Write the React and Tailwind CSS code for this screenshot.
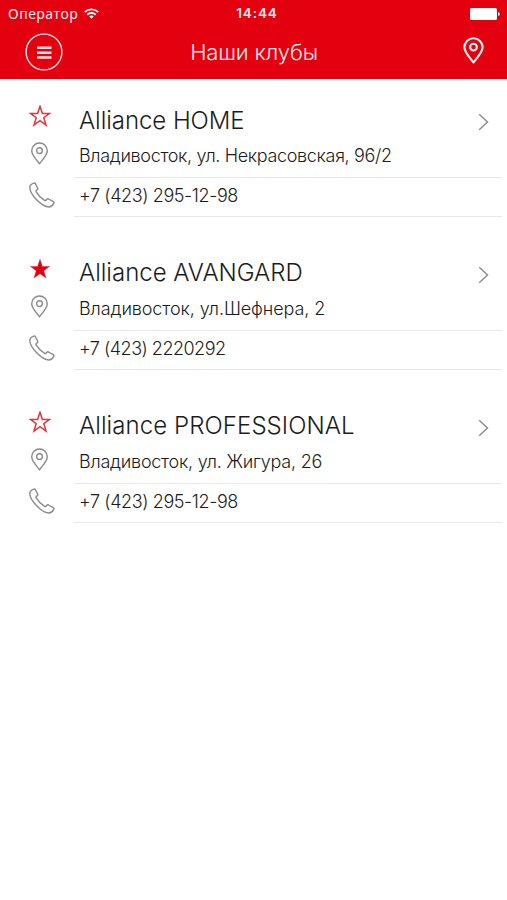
const clubs = [
  {
    name: 'Alliance HOME',
    nameSpacing: 'tracking-[-0.05px]',
    address: 'Владивосток, ул. Некрасовская, 96/2',
    addressSpacing: 'tracking-[-0.34px]',
    phone: '+7 (423) 295-12-98',
    phoneSpacing: 'tracking-[-0.4px]',
    favorite: false,
  },
  {
    name: 'Alliance AVANGARD',
    nameSpacing: 'tracking-[0px]',
    address: 'Владивосток, ул.Шефнера, 2',
    addressSpacing: 'tracking-[-0.1px]',
    phone: '+7 (423) 2220292',
    phoneSpacing: 'tracking-[-0.5px]',
    favorite: true,
  },
  {
    name: 'Alliance PROFESSIONAL',
    nameSpacing: 'tracking-[0.08px]',
    address: 'Владивосток, ул. Жигура, 26',
    addressSpacing: 'tracking-[-0.25px]',
    phone: '+7 (423) 295-12-98',
    phoneSpacing: 'tracking-[-0.4px]',
    favorite: false,
  },
];

function Star({ filled }) {
  return (
    <svg className="block h-[22px] w-[22px]" viewBox="0 0 22 22">
      <path
        d="M11 1.3 13.4 8.4H20.6L14.8 12.7 17 20.1 11 15.7 5 20.1 7.2 12.7 1.4 8.4H8.6Z"
        fill={filled ? '#e3000f' : 'none'}
        stroke="#e8303b"
        strokeWidth={filled ? 0.5 : 1.5}
      />
    </svg>
  );
}

function Pin({ className, stroke, strokeWidth }) {
  return (
    <svg className={className} viewBox="0 0 18 23" fill="none" stroke={stroke} strokeWidth={strokeWidth} strokeLinejoin="round">
      <path d="M9 21.8C7.2 18.9 1.2 13.6 1.2 8.8A7.8 7.8 0 0 1 16.8 8.8C16.8 13.6 10.8 18.9 9 21.8Z" />
      <circle cx="9" cy="8.6" r="2.9" />
    </svg>
  );
}

function Phone() {
  return (
    <svg className="block h-[26px] w-[26px]" viewBox="0 0 26 26" fill="none" stroke="#8b8b8b" strokeWidth="1.4" strokeLinejoin="round">
      <path d="M4.6 1.1C5.3.8 6 1 6.4 1.7L8.6 6C8.9 6.6 8.8 7.2 8.3 7.6L7.3 8.5C6.9 8.9 6.9 9.4 7.2 9.9C8.8 12.7 12.3 16.3 15.6 18.4C16.1 18.7 16.6 18.6 17 18.2L17.9 17.2C18.3 16.8 18.9 16.7 19.5 17L24.3 19.6C25 20 25.2 20.7 24.8 21.4C23.7 23.4 22.2 25 19.9 25C17 25 11.8 22.1 7.6 17.8C3.6 13.7.8 8.4.8 5.6C.8 3.4 2.3 1.9 4.6 1.1Z" />
    </svg>
  );
}

function Club({ club }) {
  return (
    <section className="flex h-[152.7px]">
      <div className="flex w-[74px] flex-col pl-[29px] pt-1">
        <Star filled={club.favorite} />
        <Pin className="ml-px mt-[15px] block h-[23px] w-[19px]" stroke="#8b8b8b" strokeWidth="1.4" />
        <div className="mt-[17px]">
          <Phone />
        </div>
      </div>
      <div className="w-[428px] text-[#1c1c1c]">
        <div className="flex h-[38px] items-center justify-between pl-[5px] pr-[13px]">
          <h2 className={`whitespace-nowrap pt-px text-[24px] font-light leading-none ${club.nameSpacing}`}>{club.name}</h2>
          <svg className="mt-1 block h-[18px] w-[11px]" viewBox="0 0 11 18" fill="none" stroke="#8e8e8e" strokeWidth="1.5">
            <path d="M1.2 1.2 9.5 9 1.2 16.8" />
          </svg>
        </div>
        <div className="flex h-[39px] items-center border-b border-[#e9e9e9] pb-[4px] pl-[5px]">
          <p className={`whitespace-nowrap text-[18px] font-light leading-none ${club.addressSpacing}`}>{club.address}</p>
        </div>
        <div className="flex h-[39px] items-center border-b border-[#e9e9e9] pb-[2px] pl-[5px]">
          <p className={`whitespace-nowrap text-[18px] font-light leading-none ${club.phoneSpacing}`}>{club.phone}</p>
        </div>
      </div>
    </section>
  );
}

export default function App() {
  return (
    <div className="flex h-[900px] w-[507px] flex-col overflow-hidden bg-white font-['Inter',Arial,sans-serif]">
      <header className="h-[79px] bg-[#e3000f] text-[#ffe9ea]">
        <div className="grid h-[27px] grid-cols-3 items-center pl-2 pr-[7px]">
          <div className="flex items-center gap-[6px]">
            <span className="font-['Noto_Sans',sans-serif] text-[14px] leading-none tracking-[0.5px]">Оператор</span>
            <svg className="block h-[11px] w-[15px]" viewBox="0 0 15 11" fill="none" stroke="#fff" strokeWidth="1.9">
              <path d="M.8 4.1A9.6 9.6 0 0 1 14.2 4.1" />
              <path d="M3.3 6.7A6 6 0 0 1 11.7 6.7" />
              <path d="M7.5 10.8 5.3 8.6A3.1 3.1 0 0 1 9.7 8.6Z" fill="#fff" stroke="none" />
            </svg>
          </div>
          <span className="pl-[6px] pt-px text-center text-[13.5px] font-semibold leading-none tracking-[0.9px]">14:44</span>
          <svg className="block h-3 w-[30px] justify-self-end" viewBox="0 0 30 12" fill="#fff">
            <rect x="0" y="0" width="27" height="12" rx="1.5" />
            <path d="M28 4.2C30.3 4.4 30.3 7.6 28 7.8Z" />
          </svg>
        </div>
        <div className="grid h-[50px] grid-cols-[1fr_auto_1fr] items-center pl-[25px] pr-[23px]">
          <svg className="block h-[38px] w-[38px]" viewBox="0 0 38 38" fill="none" stroke="#ffe1e3">
            <circle cx="19" cy="19" r="17.9" strokeWidth="1.4" />
            <path d="M12 14.8H26.5M12 19.7H26.5M12 24.6H26.5" strokeWidth="2.5" />
          </svg>
          <h1 className="-ml-px whitespace-nowrap text-[22px] font-light leading-none tracking-[-0.15px]">Наши клубы</h1>
          <Pin className="mb-1 block h-[27px] w-[21px] justify-self-end" stroke="#fff0f0" strokeWidth="1.8" />
        </div>
      </header>
      <main className="pt-[22.3px]">
        {clubs.map((club) => (
          <Club key={club.name} club={club} />
        ))}
      </main>
    </div>
  );
}
